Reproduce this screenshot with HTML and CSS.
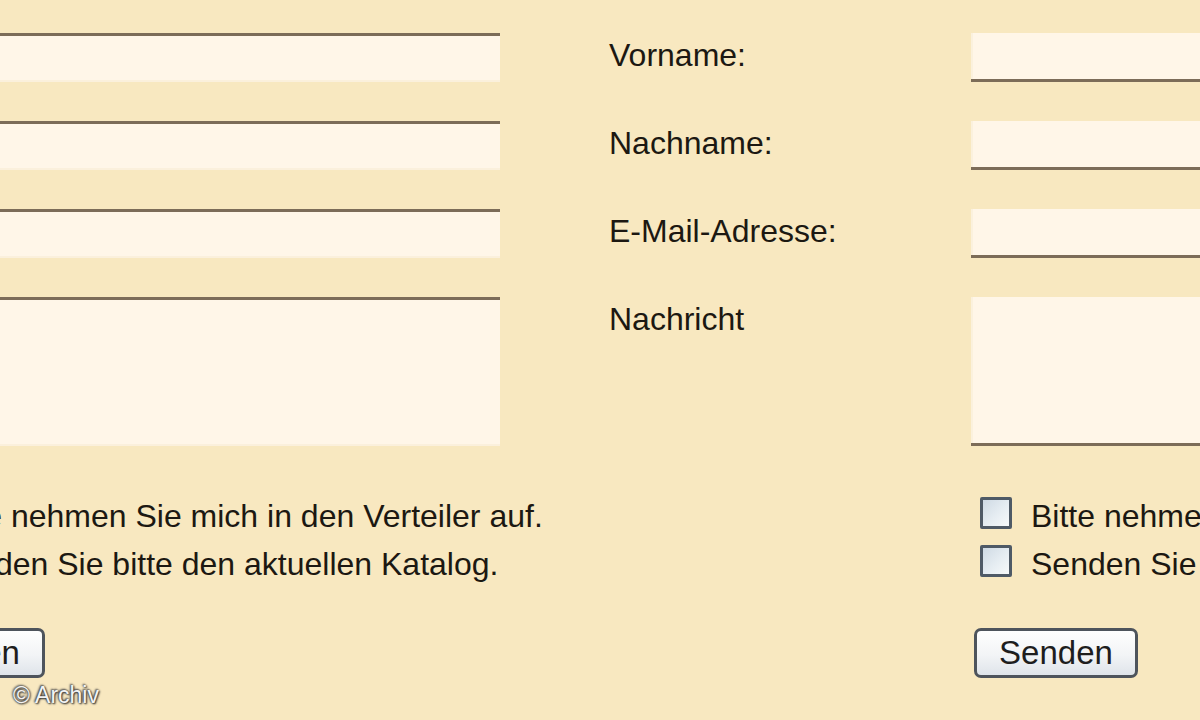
FILE: index.html
```html
<!DOCTYPE html>
<html lang="de">
<head>
<meta charset="utf-8">
<title>Kontaktformular</title>
<link rel="stylesheet" href="styles.css">
</head>
<body>
<div class="stage">
  <!-- Variante 1: Linie oberhalb der Felder -->
  <form class="form line-top">
    <div class="field">
      <label class="label" for="a-vorname">Vorname:</label>
      <input class="input" id="a-vorname" type="text">
    </div>
    <div class="field">
      <label class="label" for="a-nachname">Nachname:</label>
      <input class="input" id="a-nachname" type="text">
    </div>
    <div class="field">
      <label class="label" for="a-mail">E-Mail-Adresse:</label>
      <input class="input" id="a-mail" type="text">
    </div>
    <div class="field">
      <label class="label" for="a-msg">Nachricht</label>
      <textarea class="input area" id="a-msg"></textarea>
    </div>
    <div class="options">
      <label class="option"><input class="check" type="checkbox"><span>Bitte nehmen Sie mich in den Verteiler auf.</span></label>
      <label class="option"><input class="check" type="checkbox"><span>Senden Sie bitte den aktuellen Katalog.</span></label>
    </div>
    <div class="actions">
      <button class="button" type="button">Senden</button>
    </div>
  </form>

  <!-- Variante 2: Linie unterhalb der Felder -->
  <form class="form line-bottom">
    <div class="field">
      <label class="label" for="b-vorname">Vorname:</label>
      <input class="input" id="b-vorname" type="text">
    </div>
    <div class="field">
      <label class="label" for="b-nachname">Nachname:</label>
      <input class="input" id="b-nachname" type="text">
    </div>
    <div class="field">
      <label class="label" for="b-mail">E-Mail-Adresse:</label>
      <input class="input" id="b-mail" type="text">
    </div>
    <div class="field">
      <label class="label" for="b-msg">Nachricht</label>
      <textarea class="input area" id="b-msg"></textarea>
    </div>
    <div class="options">
      <label class="option"><input class="check" type="checkbox"><span>Bitte nehmen Sie mich in den Verteiler auf.</span></label>
      <label class="option"><input class="check" type="checkbox"><span>Senden Sie bitte den aktuellen Katalog.</span></label>
    </div>
    <div class="actions">
      <button class="button" type="button">Senden</button>
    </div>
  </form>
</div>
<div class="credit">© Archiv</div>
</body>
</html>
```

FILE: styles.css
```css
html, body {
  margin: 0;
  padding: 0;
}

body {
  width: 1200px;
  height: 720px;
  overflow: hidden;
  position: relative;
  background: #f8e8c0;
  font-family: "Liberation Sans", Arial, sans-serif;
  font-size: 32px;
  color: #1c1812;
}

.stage {
  display: flex;
  margin-left: -484px;
  padding-top: 33px;
}

.form {
  flex: 0 0 1093px;
  width: 1093px;
  margin: 0;
}

.field {
  display: grid;
  grid-template-columns: 362px 622px;
  margin-bottom: 39px;
}

.label {
  padding-top: 4px;
  line-height: 37px;
  white-space: nowrap;
}

.input {
  box-sizing: border-box;
  display: block;
  width: 622px;
  height: 49px;
  margin: 0;
  padding: 0 8px;
  border: 0;
  background: #fff6e8;
  font: inherit;
  outline: none;
  resize: none;
}

.area {
  height: 149px;
}

.line-top .input {
  border-top: 3px solid #7c6c58;
  box-shadow: inset 0 -2px 0 #fbf0dc;
}

.line-bottom .input {
  border-bottom: 3px solid #7c6c58;
  box-shadow: inset 2px 0 0 #fbf1dd;
}

/* sits right after the last field, so its margin merges with the field's */
.options {
  margin-top: 43px;
  padding-left: 371px;
}

.option {
  display: flex;
  align-items: center;
  gap: 19px;
  height: 48px;
  white-space: nowrap;
}

.check {
  appearance: none;
  -webkit-appearance: none;
  box-sizing: border-box;
  width: 32px;
  height: 32px;
  margin: 0;
  flex: 0 0 auto;
  border: 3px solid #4f5a66;
  border-radius: 2px;
  background: linear-gradient(135deg, #cfdae4 0%, #e6edf2 55%, #f7f9fa 100%);
}

.option span {
  position: relative;
  top: 3px;
}

.actions {
  margin-top: 43px;
  padding-left: 365px;
}

.button {
  box-sizing: border-box;
  width: 164px;
  height: 50px;
  margin: 0;
  padding: 0;
  border: 3px solid #4e545c;
  border-radius: 7px;
  background: linear-gradient(#fefefe 0%, #f2f4f6 55%, #dfe4ea 100%);
  font: inherit;
  font-size: 33px;
  color: #1e1e1e;
}

.credit {
  position: absolute;
  left: 13px;
  top: 682px;
  font-family: "Liberation Sans", Arial, sans-serif;
  font-size: 23px;
  color: #f4f4f4;
  text-shadow: 0 0 2px #3a3a3a, 1px 1px 2px #2a2a2a, -1px -1px 2px #555;
}
```
